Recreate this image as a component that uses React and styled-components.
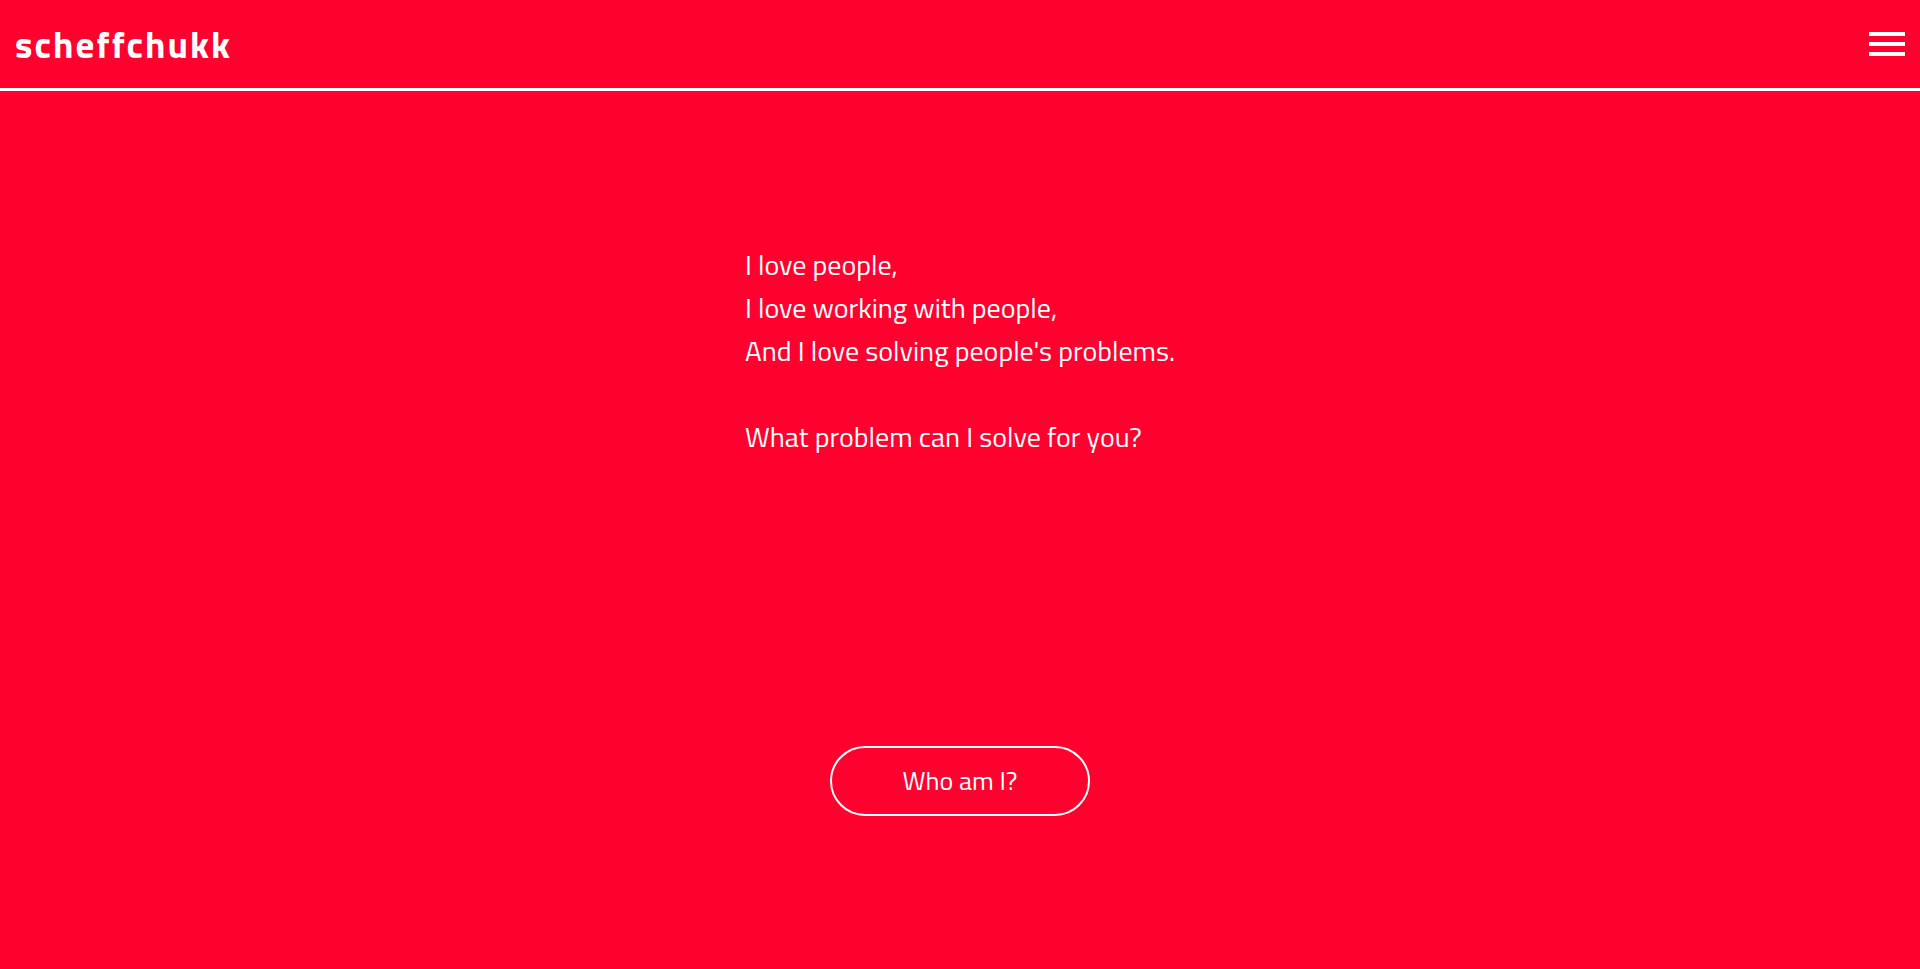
import React from "react";
import styled, { createGlobalStyle } from "styled-components";

const GlobalStyle = createGlobalStyle`
  * { box-sizing: border-box; }
  body {
    margin: 0;
    background: #ff002f;
    color: #fff;
    font-family: "Titillium Web", "Open Sans", "Noto Sans", sans-serif;
  }
`;

const Page = styled.div`
  min-height: 100vh;
  display: flex;
  flex-direction: column;
`;

const Header = styled.header`
  display: flex;
  align-items: center;
  justify-content: space-between;
  height: 91px;
  padding: 0 15px;
  border-bottom: 3px solid #fff;
`;

const Brand = styled.a`
  color: inherit;
  font-size: 37px;
  font-weight: 700;
  line-height: 48px;
  letter-spacing: 2px;
  text-decoration: none;
`;

const MenuButton = styled.button`
  display: flex;
  padding: 0;
  border: 0;
  background: none;
  color: inherit;
  cursor: pointer;
`;

const Main = styled.main`
  flex: 1;
  display: flex;
  flex-direction: column;
  align-items: center;
  justify-content: space-between;
  gap: 48px;
  padding: 152px 16px 153px;
`;

const Intro = styled.p`
  margin: 0;
  font-size: 28px;
  line-height: 43px;
`;

const Action = styled.button`
  width: 260px;
  height: 70px;
  padding: 0 0 2px;
  border: 2px solid #fff;
  border-radius: 35px;
  background: none;
  color: inherit;
  font: inherit;
  font-size: 26px;
  cursor: pointer;
`;

export default function App() {
  return (
    <Page>
      <GlobalStyle />
      <Header>
        <Brand href="#">scheffchukk</Brand>
        <MenuButton type="button" aria-label="Open menu">
          <svg width="36" height="24" viewBox="0 0 36 24" fill="currentColor" aria-hidden="true">
            <path d="M0 0h36v4H0zM0 10h36v4H0zM0 20h36v4H0z" />
          </svg>
        </MenuButton>
      </Header>
      <Main>
        <Intro>
          I love people,
          <br />
          I love working with people,
          <br />
          And I love solving people's problems.
          <br />
          <br />
          What problem can I solve for you?
        </Intro>
        <Action type="button">Who am I?</Action>
      </Main>
    </Page>
  );
}
